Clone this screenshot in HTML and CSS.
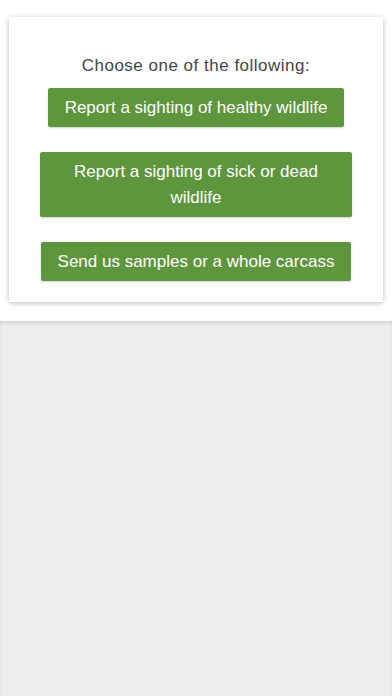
FILE: index.html
```html
<!DOCTYPE html>
<html>
<head>
<meta charset="utf-8">
<link rel="stylesheet" href="styles.css">
</head>
<body>
<div class="page">
  <div class="top">
    <div class="card">
      <p class="prompt">Choose one of the following:</p>
      <div class="actions">
        <a class="btn">Report a sighting of healthy wildlife</a>
        <a class="btn">Report a sighting of sick or dead wildlife</a>
        <a class="btn">Send us samples or a whole carcass</a>
      </div>
    </div>
  </div>
  <div class="rest"></div>
</div>
</body>
</html>
```
FILE: styles.css
```css
html, body {
  margin: 0;
  padding: 0;
  height: 100%;
}
body {
  font-family: "Liberation Sans", Arial, sans-serif;
  background: #ffffff;
}
.page {
  display: flex;
  flex-direction: column;
  min-height: 100%;
}
.top {
  background: #ffffff;
  padding: 17px 9px 19px 9px;
}
.card {
  background: #ffffff;
  box-shadow: 0 1px 5px rgba(0, 0, 0, 0.28);
  padding: 37px 31px 21px 31px;
  display: flex;
  flex-direction: column;
  align-items: center;
}
.prompt {
  margin: 0 0 11px 0;
  font-size: 17px;
  line-height: 23px;
  color: #444444;
  letter-spacing: 0.5px;
  text-align: center;
}
.actions {
  display: flex;
  flex-direction: column;
  align-items: center;
  gap: 25px;
  width: 100%;
}
.btn {
  display: block;
  box-sizing: border-box;
  max-width: 100%;
  background: #5d963c;
  color: #ffffff;
  font-size: 17px;
  line-height: 26px;
  padding: 6.5px 17px;
  text-align: center;
  border-radius: 2px;
  box-shadow: 0 1px 2px rgba(0, 0, 0, 0.18);
  text-decoration: none;
}
.rest {
  flex: 1;
  background: #eeeeee;
  box-shadow: inset 0 3px 4px -1px rgba(0, 0, 0, 0.12);
}
```
